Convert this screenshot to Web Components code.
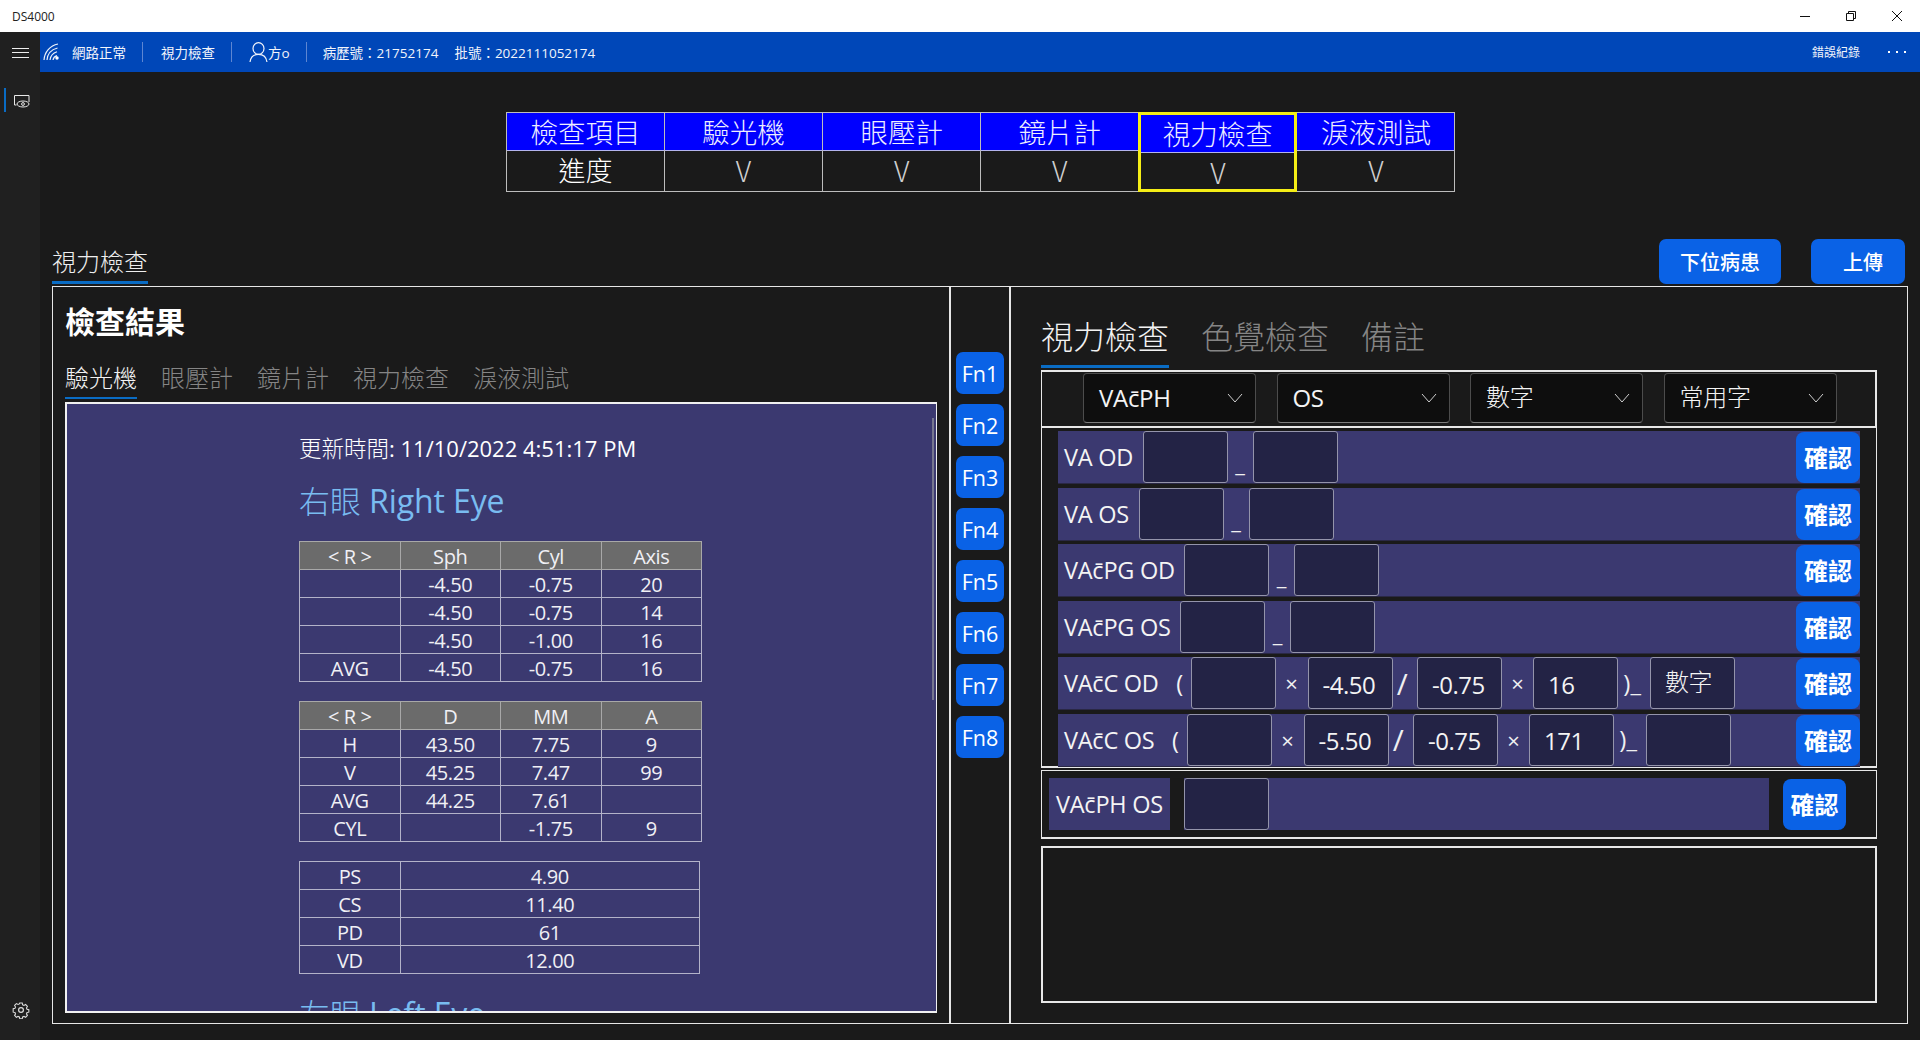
<!DOCTYPE html>
<html lang="zh-Hant">
<head>
<meta charset="utf-8">
<title>DS4000</title>
<style>
  html, body { margin: 0; height: 100%; background: #1a1a1a; overflow: hidden; }
  body { font-family: "Open Sans", "Noto Sans CJK TC", sans-serif; color: #fff; }
</style>
</head>
<body>
<app-titlebar>DS4000</app-titlebar>
<app-shell>
  <nav-rail slot="rail"></nav-rail>
  <app-topbar slot="top">
    <span slot="status">網路正常</span>
    <span slot="page">視力檢查</span>
    <span slot="user">方o</span>
    <span slot="chart">病歷號：21752174</span>
    <span slot="batch">批號：2022111052174</span>
    <span slot="log">錯誤紀錄</span>
  </app-topbar>
  <progress-strip slot="main">
    <progress-col head="檢查項目" val="進度" class="first"></progress-col>
    <progress-col head="驗光機" val="V"></progress-col>
    <progress-col head="眼壓計" val="V"></progress-col>
    <progress-col head="鏡片計" val="V"></progress-col>
    <progress-col head="視力檢查" val="V" current></progress-col>
    <progress-col head="淚液測試" val="V"></progress-col>
  </progress-strip>
  <page-head slot="main">
    <span slot="title">視力檢查</span>
    <blue-btn slot="actions" style="width:122px;height:45px;margin-right:30px">下位病患</blue-btn>
    <blue-btn slot="actions" style="width:94px;height:45px;padding-left:10px">上傳</blue-btn>
  </page-head>
  <main-frame slot="main">
    <result-panel slot="left"></result-panel>
    <fn-rail slot="mid"></fn-rail>
    <entry-panel slot="right"></entry-panel>
  </main-frame>
</app-shell>

<script>
// small helper, every element below uses it
function shadow(el, html) {
  el.attachShadow({ mode: "open" }).innerHTML = html;
}

class AppTitlebar extends HTMLElement {
  constructor() {
    super();
    shadow(this, `
      <style>
        :host { display: flex; align-items: center; height: 32px; background: #fff; color: #222; font-size: 12px; padding-left: 12px; box-sizing: border-box; font-family: "Open Sans", sans-serif; }
        .ctl { margin-left: auto; display: flex; }
        svg { display: block; width: 46px; height: 32px; }
      </style>
      <slot></slot>
      <div class="ctl">
        <svg viewBox="0 0 46 32"><path d="M18 16.500h10" stroke="#111" fill="none"/></svg>
        <svg viewBox="0 0 46 32"><path d="M18.500 13.500h7v7h-7zM20.500 13.500v-2h7v7h-2" stroke="#111" fill="none"/></svg>
        <svg viewBox="0 0 46 32"><path d="M18 11l10 10M28 11l-10 10" stroke="#111" fill="none"/></svg>
      </div>`);
  }
}

class AppShell extends HTMLElement {
  constructor() {
    super();
    shadow(this, `
      <style>
        :host { display: grid; grid-template-columns: 40px 1fr; height: 1008px; }
        .rail { grid-row: 1 / span 2; display: flex; }
        .main { display: flex; flex-direction: column; height: 968px; }
      </style>
      <div class="rail"><slot name="rail"></slot></div>
      <div><slot name="top"></slot></div>
      <div class="main"><slot name="main"></slot></div>`);
  }
}

class NavRail extends HTMLElement {
  constructor() {
    super();
    shadow(this, `
      <style>
        :host { display: flex; flex-direction: column; width: 40px; background: #202020; position: relative; }
        .burger { margin: 16px 0 0 12px; width: 17px; height: 10px; border-top: 1px solid #eee; border-bottom: 1px solid #eee; position: relative; box-sizing: border-box; }
        .burger::after { content: ""; position: absolute; left: 0; right: 0; top: 3px; border-top: 1px solid #eee; }
        .sel { margin: 30px 0 0 4px; height: 24px; border-left: 2px solid #0a6cc4; display: flex; align-items: center; padding-left: 7px; }
        .gear { margin: auto 0 21px 12px; }
        svg { display: block; }
      </style>
      <div class="burger"></div>
      <div class="sel">
        <svg width="17" height="16" viewBox="0 0 17 16" fill="none" stroke="#e8e8e8">
          <path d="M1.500 13V3.500h14.500v6.500"/>
          <path d="M1.500 13h2"/>
          <ellipse cx="10" cy="12" rx="6" ry="3" fill="#202020"/>
          <circle cx="10" cy="12" r="1.400"/>
        </svg>
      </div>
      <svg class="gear" width="18" height="18" viewBox="0 0 18 18" fill="none" stroke="#ddd" stroke-width="1.200">
        <circle cx="9" cy="9" r="2.400"/>
        <path d="M7.600 1.200h2.800l.4 2 1.500.7 1.800-1 2 2-1 1.800.6 1.500 2 .4v2.800l-2 .4-.6 1.500 1 1.800-2 2-1.800-1-1.500.6-.4 2H7.600l-.4-2-1.500-.6-1.800 1-2-2 1-1.800-.6-1.500-2-.4V7.600l2-.4.6-1.500-1-1.800 2-2 1.800 1 1.500-.7z" transform="translate(.9 .9) scale(.9)"/>
      </svg>`);
  }
}

class AppTopbar extends HTMLElement {
  constructor() {
    super();
    shadow(this, `
      <style>
        :host { display: flex; align-items: center; height: 40px; background: #0047b8; color: #f2f5fb; font-size: 13.500px; }
        .sep { width: 1px; height: 20px; background: #5d86d2; margin: 0 16px; }
        .sep.a { margin-right: 18px; }
        .wifi { margin: 0 11px 0 3px; display: block; }
        .user { margin-left: 1px; display: block; }
        .r { margin-left: auto; font-size: 12px; }
        .dots { margin: 0 14px 0 28px; display: flex; gap: 6px; }
        .dots i { width: 2px; height: 2px; background: #fff; }
        ::slotted([slot=chart]) { margin-right: 16px; }
      </style>
      <svg class="wifi" width="18" height="18" viewBox="0 0 18 18" fill="none" stroke="#eef3fb" stroke-width="1.200">
        <path d="M1 17C1.500 9 7 2.500 15 1"/>
        <path d="M4 17C4.500 11 8.500 6.500 14.500 5"/>
        <path d="M7 17C7.500 13 10 10 14 8.800"/>
        <path d="M10 17c.3-2 1.600-3.700 4-4.400"/>
        <circle cx="14" cy="15" r="1.700" fill="#fff" stroke="none"/>
      </svg>
      <slot name="status"></slot><div class="sep a"></div>
      <slot name="page"></slot><div class="sep"></div>
      <svg class="user" width="19" height="20" viewBox="0 0 19 20" fill="none" stroke="#f2f5fb" stroke-width="1.200">
        <ellipse cx="9.500" cy="6.500" rx="5.500" ry="5.800"/>
        <path d="M1 20c.6-4.600 3.600-7.700 8.500-7.700s7.900 3.100 8.500 7.700"/>
      </svg>
      <slot name="user"></slot><div class="sep"></div>
      <slot name="chart"></slot><slot name="batch"></slot>
      <span class="r"><slot name="log"></slot></span>
      <div class="dots"><i></i><i></i><i></i></div>`);
  }
}

class ProgressStrip extends HTMLElement {
  constructor() {
    super();
    shadow(this, `
      <style>:host { display: flex; margin: 40px 0 0 466px; width: 950px; }</style>
      <slot></slot>`);
  }
}

class ProgressCol extends HTMLElement {
  constructor() {
    super();
    const cur = this.hasAttribute("current");
    const first = this.classList.contains("first");
    shadow(this, `
      <style>
        :host { display: block; width: ${first ? 159 : 158.1}px; flex: none; box-sizing: border-box; height: 80px; font-family: "Noto Sans CJK TC", sans-serif; font-weight: 300; }
        .box { height: 80px; box-sizing: border-box; border: 1px solid #bdbdbd; border-left-width: ${first ? 1 : 0}px; ${cur ? "border: 3px solid #f5ee16; margin-left: -1px; width: calc(100% + 1px);" : ""} }
        .h { height: 37px; background: #0000ff; color: #eef; font-size: 27.500px; line-height: 37px; text-align: center; border-bottom: 1px solid #b4b4ee; box-sizing: content-box; }
        .v { text-align: center; color: ${first ? "#fff" : "#cfcfcf"}; font-size: ${first ? 27 : 28}px; line-height: ${cur ? 39 : 38}px; }
      </style>
      <div class="box">
        <div class="h">${this.getAttribute("head")}</div>
        <div class="v">${this.getAttribute("val")}</div>
      </div>`);
  }
}

class BlueBtn extends HTMLElement {
  constructor() {
    super();
    shadow(this, `
      <style>
        :host { display: flex; align-items: center; justify-content: center; flex: none; background: #0a62e6; color: #fff; border-radius: 7px; font-size: 20px; font-weight: 500; box-sizing: border-box; font-family: "Open Sans", "Noto Sans CJK TC", sans-serif; }
      </style>
      <slot></slot>`);
  }
}

class PageHead extends HTMLElement {
  constructor() {
    super();
    shadow(this, `
      <style>
        :host { display: flex; justify-content: space-between; align-items: flex-end; margin: 47px 15px 2px 12px; height: 45px; }
        .t { font-size: 24px; font-weight: 300; line-height: 32px; padding: 0 0 4px; border-bottom: 3px solid #0a6cc4; font-family: "Noto Sans CJK TC", sans-serif; color: #eee; }
        .a { display: flex; }
      </style>
      <div class="t"><slot name="title"></slot></div>
      <div class="a"><slot name="actions"></slot></div>`);
  }
}

class MainFrame extends HTMLElement {
  constructor() {
    super();
    shadow(this, `
      <style>
        :host { display: grid; grid-template-columns: 896px 2px 58px 2px 1fr; margin: 0 12px 0 12px; height: 738px; border: 1px solid #e6e6e6; box-sizing: border-box; }
        i { background: #e6e6e6; }
      </style>
      <div><slot name="left"></slot></div><i></i>
      <div><slot name="mid"></slot></div><i></i>
      <div><slot name="right"></slot></div>`);
  }
}

class TabRow extends HTMLElement {
  constructor() {
    super();
    const size = this.getAttribute("size") || 24;
    const gap = this.getAttribute("gap") || 24;
    const bar = this.getAttribute("bar") || 2;
    const h = this.getAttribute("h") || 32;
    const tabs = this.getAttribute("tabs").split(",");
    shadow(this, `
      <style>
        :host { display: flex; gap: ${gap}px; font-family: "Noto Sans CJK TC", sans-serif; font-weight: 300; font-size: ${size}px; line-height: ${h}px; color: #858585; }
        .on { color: #f2f2f2; border-bottom: ${bar}px solid #0a6cc4; }
        span { padding-bottom: var(--under, 5px); border-bottom: ${bar}px solid transparent; }
      </style>
      ${tabs.map((t, i) => `<span class="${i ? "" : "on"}">${t}</span>`).join("")}`);
  }
}

class ExamTable extends HTMLElement {
  constructor() {
    super();
    const head = this.getAttribute("head");
    const wide = this.hasAttribute("wide");
    const rows = JSON.parse(this.getAttribute("rows"));
    const cell = c => `<td>${c}</td>`;
    shadow(this, `
      <style>
        :host { display: block; margin-bottom: 19px; }
        table { border-collapse: collapse; table-layout: fixed; width: ${wide ? 401 : 403}px; font-family: "Open Sans", sans-serif; font-size: 20px; letter-spacing: -.4px; }
        td, th { border: 1px solid #b3b3c9; height: 26px; padding: 0 0 1px; text-align: center; font-weight: 400; color: #f0f0f5; line-height: 22px; vertical-align: bottom; overflow: hidden; }
        th { background: #6b6b6b; border-color: #a8a8a8; }
        col.a { width: 100.500px; }
      </style>
      <table>
        <colgroup><col class="a">${wide ? "<col>" : "<col><col><col>"}</colgroup>
        ${head ? `<tr>${head.split(",").map(h => `<th>${h.replace("<", "&lt;").replace(">", "&gt;")}</th>`).join("")}</tr>` : ""}
        ${rows.map(r => `<tr>${r.map(cell).join("")}</tr>`).join("")}
      </table>`);
  }
}

class ResultPanel extends HTMLElement {
  constructor() {
    super();
    const t1 = [["", "-4.50", "-0.75", "20"], ["", "-4.50", "-0.75", "14"], ["", "-4.50", "-1.00", "16"], ["AVG", "-4.50", "-0.75", "16"]];
    const t2 = [["H", "43.50", "7.75", "9"], ["V", "45.25", "7.47", "99"], ["AVG", "44.25", "7.61", ""], ["CYL", "", "-1.75", "9"]];
    const t3 = [["PS", "4.90"], ["CS", "11.40"], ["PD", "61"], ["VD", "12.00"]];
    shadow(this, `
      <style>
        :host { display: flex; flex-direction: column; height: 100%; padding: 0 12px 0 12px; box-sizing: border-box; }
        h2 { margin: 15px 0 0; font: 700 30px/36px "Noto Sans CJK TC", sans-serif; color: #fff; }
        tab-row { margin-top: 23px; --under: 4px; }
        .pane { position: relative; height: 611px; margin-top: 3px; border: 2px solid #f0f0f0; border-right-width: 1px; background: #3b3970; overflow: hidden; box-sizing: border-box; padding: 27px 0 0 232px; }
        .bar { position: absolute; right: 2px; top: 14px; width: 2px; height: 282px; background: #77778f; }
        .time { font-size: 22px; line-height: 32px; color: #fff; }
        .time b { font-family: "Noto Sans CJK TC", sans-serif; font-weight: 300; font-size: 22.500px; }
        h3 { margin: 16px 0 20px; font-size: 32px; line-height: 40px; font-weight: 400; color: #79bcf0; letter-spacing: -.1px; white-space: nowrap; }
        h3 b { font-family: "Noto Sans CJK TC", sans-serif; font-weight: 300; font-size: 31px; }
        .clip { margin-top: 8px; }
      </style>
      <h2>檢查結果</h2>
      <tab-row tabs="驗光機,眼壓計,鏡片計,視力檢查,淚液測試" gap="24"></tab-row>
      <div class="pane">
        <div class="bar"></div>
        <div class="time"><b>更新時間</b>: 11/10/2022 4:51:17 PM</div>
        <h3><b>右眼</b> Right Eye</h3>
        <exam-table head="< R >,Sph,Cyl,Axis" rows='${JSON.stringify(t1)}'></exam-table>
        <exam-table head="< R >,D,MM,A" rows='${JSON.stringify(t2)}'></exam-table>
        <exam-table wide rows='${JSON.stringify(t3)}'></exam-table>
        <h3 class="clip"><b>左眼</b> Left Eye</h3>
      </div>`);
  }
}

class FnRail extends HTMLElement {
  constructor() {
    super();
    let btns = "";
    for (let i = 1; i <= 8; i++) btns += `<blue-btn style="height:42px;width:48px;font-weight:400;font-size:21.500px">Fn${i}</blue-btn>`;
    shadow(this, `
      <style>:host { display: flex; flex-direction: column; gap: 10px; padding: 65px 0 0 5px; }</style>
      ${btns}`);
  }
}

class VaSelect extends HTMLElement {
  constructor() {
    super();
    shadow(this, `
      <style>
        :host { display: flex; align-items: center; justify-content: space-between; width: 173px; height: 50px; box-sizing: border-box; background: #0e0e0e; border: 1px solid #4c4c4c; border-bottom-color: #7d7d7d; border-radius: 4px; padding: 0 12px 2px 15px; font-size: 24px; letter-spacing: -.3px; font-weight: 400; color: #f4f4f4; }
        svg { margin-top: 2px; }
      </style>
      <span><slot></slot></span>
      <svg width="16" height="10" viewBox="0 0 16 10" fill="none" stroke="#cfcfcf"><path d="M1 1l7 8 7-8"/></svg>`);
  }
}

class VaField extends HTMLElement {
  constructor() {
    super();
    shadow(this, `
      <style>
        :host { display: flex; align-items: center; flex: none; width: 85px; height: 52px; box-sizing: border-box; background: #232345; border: 1px solid #9494ab; border-radius: 3px; padding: 2px 0 0 14px; font-size: 24px; letter-spacing: -.5px; color: #f4f4f4; }
      </style>
      <slot></slot>`);
  }
}

class VaSep extends HTMLElement {
  constructor() {
    super();
    shadow(this, `
      <style>
        :host { display: flex; flex: none; justify-content: center; align-items: center; height: 52px; font-size: 22px; color: #f0f0f0; box-sizing: border-box; }
      </style>
      <slot></slot>`);
  }
}

class VaLabel extends HTMLElement {
  constructor() {
    super();
    shadow(this, `
      <style>
        :host { display: flex; flex: none; align-items: center; height: 52px; font-size: 23.500px; letter-spacing: -.25px; color: #f4f4f4; white-space: nowrap; box-sizing: border-box; }
      </style>
      <slot></slot>`);
  }
}

class VaRow extends HTMLElement {
  constructor() {
    super();
    shadow(this, `
      <style>
        :host { display: flex; height: 52px; margin-left: 16px; width: 802px; padding-left: 6px; box-sizing: border-box; background: #3b3970; box-shadow: 0 1px 0 #2a2845; }
        .act { margin-left: auto; display: flex; align-items: flex-end; }
      </style>
      <slot></slot>
      <div class="act"><slot name="action"></slot></div>`);
  }
}

class OkBtn extends HTMLElement {
  constructor() {
    super();
    shadow(this, `
      <style>
        :host { display: flex; align-items: center; justify-content: center; width: 64px; height: 51px; box-sizing: border-box; padding-bottom: 2px; background: #0a62e6; color: #fff; border-radius: 8px; font: 700 24px "Noto Sans CJK TC", sans-serif; flex: none; }
      </style>
      <slot></slot>`);
  }
}

class EntryPanel extends HTMLElement {
  constructor() {
    super();
    const c = "VAc\u0304";
    const row = (inner) => `<va-row>${inner}<ok-btn slot="action">確認</ok-btn></va-row>`;
    const pair = (label, w) => row(`<va-label style="width:${w}px">${label}</va-label><va-field></va-field><va-sep style="width:25px;align-items:flex-end;padding-bottom:5px">_</va-sep><va-field></va-field>`);
    const full = (label, w, a, b, d, last) => row(`<va-label style="width:${w}px">${label}</va-label>
      <va-field></va-field><va-sep style="width:32px">×</va-sep>
      <va-field>${a}</va-field><va-sep style="width:24.500px;font-size:30px;padding-right:5px">/</va-sep>
      <va-field>${b}</va-field><va-sep style="width:31px">×</va-sep>
      <va-field>${d}</va-field><va-sep style="width:32px;font-size:24px;padding:0 4px 2px 0">)_</va-sep>
      <va-field>${last}</va-field>`);
    const cjk = t => `<span style="font-weight:300;vertical-align:3px">${t}</span>`;
    shadow(this, `
      <style>
        :host { display: flex; flex-direction: column; height: 100%; padding: 0 30px 0 30px; box-sizing: border-box; }
        tab-row { margin-top: 26px; --under: 8px; }
        .sel, .rows, .single, .notes { border: 1px solid #e8e8e8; box-sizing: border-box; width: 836px; }
        .sel { display: flex; gap: 20.500px; padding: 1px 0 0 41px; height: 58px; margin-top: 2px; border-width: 2px 2px 2px 1px; }
        .rows { display: flex; flex-direction: column; gap: 4.600px; height: 341px; padding-top: 3px; margin-top: -1px; border-bottom-width: 2px; }
        .single { display: flex; height: 69px; padding: 7px 0 0 7px; margin-top: 2px; border-bottom-width: 2px; }
        .lab { background: #3b3970; width: 121px; height: 52px; margin-right: 14px; display: flex; align-items: center; padding-left: 7px; box-sizing: border-box; }
        .fill { background: #3b3970; width: 585px; height: 52px; display: flex; margin-right: 14px; }
        .notes { height: 157px; margin-top: 7px; border-width: 2px; }
        ok-btn { margin-top: 1px; }
      </style>
      <tab-row tabs="視力檢查,色覺檢查,備註" size="32" gap="32" bar="3" h="44"></tab-row>
      <div class="sel">
        <va-select>${c}PH</va-select>
        <va-select>OS</va-select>
        <va-select>${cjk("數字")}</va-select>
        <va-select>${cjk("常用字")}</va-select>
      </div>
      <div class="rows">
        ${pair("VA OD", 78.6)}
        ${pair("VA OS", 74.5)}
        ${pair(c + "PG OD", 120)}
        ${pair(c + "PG OS", 116)}
        ${full(c + "C OD&nbsp;&nbsp;&nbsp;(", 126.6, "-4.50", "-0.75", "16", `<span style="font-weight:300;margin-bottom:7px">數字</span>`)}
        ${full(c + "C OS&nbsp;&nbsp;&nbsp;(", 122.6, "-5.50", "-0.75", "171", "")}
      </div>
      <div class="single">
        <div class="lab"><va-label>${c}PH OS</va-label></div>
        <div class="fill"><va-field></va-field></div>
        <ok-btn style="width:63px">確認</ok-btn>
      </div>
      <div class="notes"></div>`);
  }
}

// children first, so the shadow trees built in constructors are already upgraded
customElements.define("blue-btn", BlueBtn);
customElements.define("ok-btn", OkBtn);
customElements.define("tab-row", TabRow);
customElements.define("exam-table", ExamTable);
customElements.define("va-select", VaSelect);
customElements.define("va-field", VaField);
customElements.define("va-sep", VaSep);
customElements.define("va-label", VaLabel);
customElements.define("va-row", VaRow);
customElements.define("progress-col", ProgressCol);
customElements.define("progress-strip", ProgressStrip);
customElements.define("result-panel", ResultPanel);
customElements.define("fn-rail", FnRail);
customElements.define("entry-panel", EntryPanel);
customElements.define("main-frame", MainFrame);
customElements.define("page-head", PageHead);
customElements.define("nav-rail", NavRail);
customElements.define("app-topbar", AppTopbar);
customElements.define("app-shell", AppShell);
customElements.define("app-titlebar", AppTitlebar);
</script>
</body>
</html>
